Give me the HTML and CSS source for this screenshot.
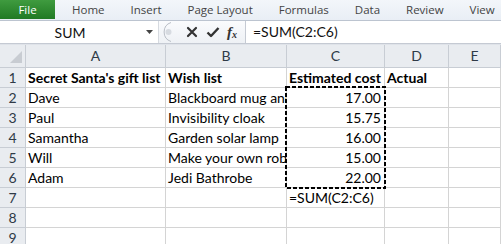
FILE: index.html
```html
<!DOCTYPE html>
<html lang="en">
<head>
<meta charset="UTF-8">
<title>Secret Santa - Excel</title>
<link rel="stylesheet" href="styles.css">
</head>
<body>

<div class="ribbon">
  <div class="tab file">File</div>
  <div class="tab">Home</div>
  <div class="tab">Insert</div>
  <div class="tab">Page Layout</div>
  <div class="tab">Formulas</div>
  <div class="tab">Data</div>
  <div class="tab">Review</div>
  <div class="tab">View</div>
</div>

<div class="formula-bar">
  <div class="name-box">
    <span class="name">SUM</span>
    <svg class="drop" width="7" height="4" viewBox="0 0 7 4"><path d="M0 0h7L3.5 4z" fill="#444"/></svg>
  </div>
  <div class="fx-buttons">
    <svg class="handle" width="12" height="22" viewBox="0 0 12 22">
      <path d="M11 1.5A10 10 0 0 0 11 20.5" fill="none" stroke="#b9bec6" stroke-width="1"/>
      <circle cx="8.5" cy="11" r="3" fill="#d7dbe1"/>
    </svg>
    <svg class="btn cancel" width="12" height="12" viewBox="0 0 12 12"><path d="M2 2l8 8M10 2l-8 8" stroke="#333" stroke-width="2.2" stroke-linecap="round"/></svg>
    <svg class="btn" width="14" height="12" viewBox="0 0 14 12"><path d="M1.5 6.5l3.5 3.5L12.5 2" fill="none" stroke="#333" stroke-width="2.4" stroke-linejoin="round"/></svg>
    <span class="fx">f<sub>x</sub></span>
  </div>
  <div class="formula-input">=SUM(C2:C6)</div>
</div>

<div class="sheet">
  <div class="corner"><svg width="12" height="12" viewBox="0 0 12 12"><path d="M12 0V12H0z" fill="#c8ccd2"/></svg></div>
  <div class="col-head">A</div>
  <div class="col-head">B</div>
  <div class="col-head">C</div>
  <div class="col-head">D</div>
  <div class="col-head">E</div>

  <div class="row-head">1</div>
  <div class="cell bold">Secret Santa's gift list</div>
  <div class="cell bold">Wish list</div>
  <div class="cell bold">Estimated cost</div>
  <div class="cell bold">Actual</div>
  <div class="cell"></div>

  <div class="row-head">2</div>
  <div class="cell">Dave</div>
  <div class="cell">Blackboard mug and chalk</div>
  <div class="cell num">17.00</div>
  <div class="cell"></div>
  <div class="cell"></div>

  <div class="row-head">3</div>
  <div class="cell">Paul</div>
  <div class="cell">Invisibility cloak</div>
  <div class="cell num">15.75</div>
  <div class="cell"></div>
  <div class="cell"></div>

  <div class="row-head">4</div>
  <div class="cell">Samantha</div>
  <div class="cell">Garden solar lamp</div>
  <div class="cell num">16.00</div>
  <div class="cell"></div>
  <div class="cell"></div>

  <div class="row-head">5</div>
  <div class="cell">Will</div>
  <div class="cell">Make your own robot</div>
  <div class="cell num">15.00</div>
  <div class="cell"></div>
  <div class="cell"></div>

  <div class="row-head">6</div>
  <div class="cell">Adam</div>
  <div class="cell">Jedi Bathrobe</div>
  <div class="cell num">22.00</div>
  <div class="cell"></div>
  <div class="cell"></div>

  <div class="row-head">7</div>
  <div class="cell"></div>
  <div class="cell"></div>
  <div class="cell editing">=SUM(C2:C6)</div>
  <div class="cell"></div>
  <div class="cell"></div>

  <div class="row-head">8</div>
  <div class="cell"></div>
  <div class="cell"></div>
  <div class="cell"></div>
  <div class="cell"></div>
  <div class="cell"></div>

  <div class="row-head">9</div>
  <div class="cell"></div>
  <div class="cell"></div>
  <div class="cell"></div>
  <div class="cell"></div>
  <div class="cell"></div>

  <!-- copy range marquee around C2:C6 -->
  <svg class="marquee" width="101" height="103" viewBox="0 0 101 103">
    <rect x="1" y="1" width="99" height="101" fill="none" stroke="#000" stroke-width="2" stroke-dasharray="4 2"/>
  </svg>
</div>

</body>
</html>
```

FILE: styles.css
```css
body {
  margin: 0;
  width: 501px;
  height: 244px;
  overflow: hidden;
  background-color: #fff;
  font-family: Lato, "Liberation Sans", sans-serif;
}
.ribbon {
  display: flex;
  height: 20px;
  background: linear-gradient(#f3f6fa, #e9eef5);
  border-bottom: 1px solid #bcc4d0;
  font-family: "Open Sans", "Noto Sans", sans-serif;
  font-size: 11.5px;
  color: #444;
  white-space: nowrap;
  overflow: hidden;
}
.tab {
  flex-shrink: 0;
  line-height: 19px;
  margin-left: 17px;
  margin-right: 9px;
}
.tab.file {
  width: 55px;
  margin: 0;
  text-align: center;
  color: #fff;
  background: linear-gradient(#3f9b3f, #217a24);
  height: 19px;
}
.formula-bar {
  display: flex;
  height: 22px;
  background-color: #fff;
  border-bottom: 1px solid #c5cad3;
}
.name-box {
  width: 158px;
  display: flex;
  align-items: center;
  border-right: 1px solid #d6dae0;
  font-size: 14px;
}
.name-box .name {
  flex: 1;
  text-align: center;
  padding-right: 6px;
  color: #111;
}
.name-box .drop {
  margin-right: 5px;
}
.fx-buttons {
  width: 86px;
  display: flex;
  align-items: center;
  background: linear-gradient(#fafbfd, #eef1f5);
  border-right: 1px solid #c5cad3;
}
.fx-buttons .handle {
  margin-left: 1px;
}
.fx-buttons .btn {
  margin-left: 8px;
}
.fx-buttons .btn.cancel {
  margin-left: 14px;
}
.fx {
  margin-left: 7px;
  font-family: "Liberation Serif", serif;
  font-style: italic;
  font-weight: bold;
  font-size: 15px;
  color: #333;
}
.fx sub {
  font-size: 10px;
  vertical-align: -1px;
}
.formula-input {
  flex: 1;
  line-height: 22px;
  padding-left: 7px;
  font-size: 14px;
  color: #111;
}
.sheet {
  position: relative;
  display: grid;
  grid-template-columns: 26px 140px 121px 98px 64px 52px;
  grid-template-rows: 23px repeat(9, 20px);
  border-top: 1px solid #dfe3e9;
  font-size: 14px;
  color: #000;
}
.corner,
.col-head,
.row-head {
  background-color: #e9ecf0;
  border-right: 1px solid #c8cdd4;
  border-bottom: 1px solid #c8cdd4;
  color: #2f3a47;
}
.corner {
  display: flex;
  align-items: flex-end;
  justify-content: flex-end;
  padding: 0 3px 4px 0;
}
.col-head {
  text-align: center;
  line-height: 22px;
}
.row-head {
  text-align: center;
  line-height: 19px;
}
.cell {
  border-right: 1px solid #d4d4d4;
  border-bottom: 1px solid #d4d4d4;
  line-height: 19px;
  padding-left: 2px;
  white-space: nowrap;
  overflow: hidden;
}
.cell.bold {
  font-weight: bold;
}
.cell.num {
  text-align: right;
  padding-right: 3px;
  padding-left: 0;
}
.cell.editing {
  overflow: visible;
}
.marquee {
  position: absolute;
  left: 285px;
  top: 41px;
}
```
